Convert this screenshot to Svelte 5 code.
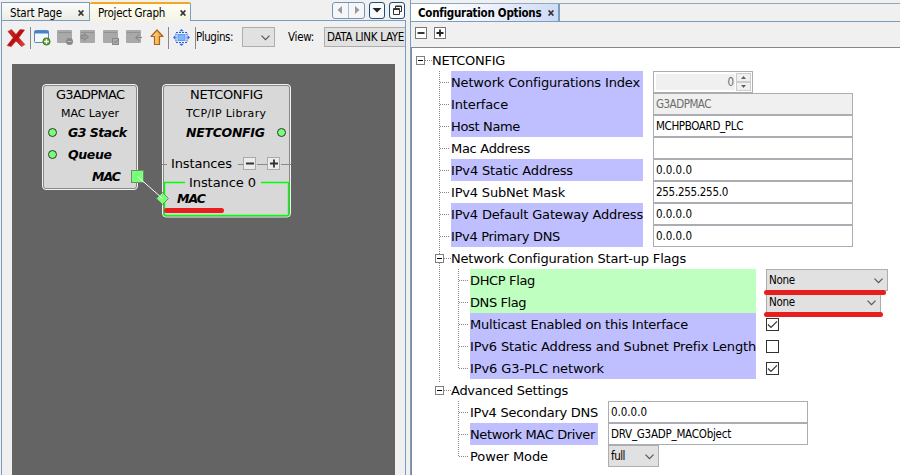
<script>
  const interfaceRows = [
    { label: 'Network Configurations Index', w: 189, tone: 'blue', kind: 'spin', value: '0' },
    { label: 'Interface', w: 57, tone: 'blue', kind: 'text', value: 'G3ADPMAC', vw: 55, disabled: true },
    { label: 'Host Name', w: 69, tone: 'blue', kind: 'text', value: 'MCHPBOARD_PLC', vw: 87 },
    { label: 'Mac Address', w: 79, kind: 'text', value: '', vw: 0 },
    { label: 'IPv4 Static Address', w: 122, tone: 'blue', kind: 'text', value: '0.0.0.0', vw: 36 },
    { label: 'IPv4 SubNet Mask', w: 114, kind: 'text', value: '255.255.255.0', vw: 72 },
    { label: 'IPv4 Default Gateway Address', w: 192, tone: 'blue', kind: 'text', value: '0.0.0.0', vw: 36 },
    { label: 'IPv4 Primary DNS', w: 109, tone: 'blue', kind: 'text', value: '0.0.0.0', vw: 36 }
  ];
  const flagRows = [
    { label: 'DHCP Flag', w: 65, tone: 'green', kind: 'combo', value: 'None', vw: 26, size: 122, mark: 122 },
    { label: 'DNS Flag', w: 56, tone: 'green', kind: 'combo', value: 'None', vw: 26, size: 115, mark: 119 },
    { label: 'Multicast Enabled on this Interface', w: 218, tone: 'blue', kind: 'check', on: true },
    { label: 'IPv6 Static Address and Subnet Prefix Length', w: 286, tone: 'blue', kind: 'check', on: false },
    { label: 'IPv6 G3-PLC network', w: 134, tone: 'blue', kind: 'check', on: true }
  ];
  const advancedRows = [
    { label: 'IPv4 Secondary DNS', w: 128, kind: 'text', value: '0.0.0.0', vw: 36 },
    { label: 'Network MAC Driver', w: 125, tone: 'blue', kind: 'text', value: 'DRV_G3ADP_MACObject', vw: 120 },
    { label: 'Power Mode', w: 78, kind: 'combo', value: 'full', vw: 14, size: 51 }
  ];

  // Spreads the letters of a label over its intended width.
  function fit(node, width) {
    const n = node.textContent.length;
    if (!n || !width) return;
    const natural = node.getBoundingClientRect().width;
    node.style.letterSpacing = (width - natural) / n + 'px';
  }
</script>

{#snippet chevron()}
  <svg class="chev" width="9" height="6" viewBox="0 0 9 6"><path d="M.5 .7 4.5 4.7 8.5 .7" fill="none" stroke="#555" stroke-width="1.2" /></svg>
{/snippet}

{#snippet closeX()}
  <svg width="6" height="6" viewBox="0 0 6 6"><path d="M.6 .4 5.4 5.6M5.4 .4 .6 5.6" stroke="#333" stroke-width="1.6" /></svg>
{/snippet}

{#snippet rows(list)}
  {#each list as r, i}
    <div class="row">
      <div class="branch" class:last={i === list.length - 1}></div>
      <div class="label {r.tone ?? ''}"><span use:fit={r.w}>{r.label}</span></div>
      <div class="cell">
        {#if r.kind === 'text'}
          <div class="field" class:disabled={r.disabled}><span use:fit={r.vw}>{r.value}</span></div>
        {:else if r.kind === 'spin'}
          <div class="spinner">
            <div class="num">{r.value}</div>
            <div class="arrows">
              <div><svg width="5" height="3"><path d="M0 3 2.5 0 5 3Z" fill="#606060" /></svg></div>
              <div><svg width="5" height="3"><path d="M0 0 2.5 3 5 0Z" fill="#606060" /></svg></div>
            </div>
          </div>
        {:else if r.kind === 'combo'}
          <div class="combo" style="width:{r.size}px"><span use:fit={r.vw}>{r.value}</span>{@render chevron()}</div>
          {#if r.mark}<div class="mark" style="width:{r.mark}px"></div>{/if}
        {:else}
          <div class="check">
            {#if r.on}<svg width="11" height="11" viewBox="0 0 11 11"><path d="M1 5.5 4 8.5 10 2.3" fill="none" stroke="#333" stroke-width="1.2" /></svg>{/if}
          </div>
        {/if}
      </div>
    </div>
  {/each}
{/snippet}

{#snippet head(text, w)}
  <div class="head">
    <svg width="9" height="9"><rect x=".5" y=".5" width="8" height="8" fill="#fff" stroke="#808080" /><path d="M2 4.5H7" stroke="#000" /></svg>
    <i></i><span use:fit={w}>{text}</span>
  </div>
{/snippet}

<div class="app">
  <section class="left">
    <div class="tabs">
      <div class="tab start"><span use:fit={52}>Start Page</span>{@render closeX()}</div>
      <div class="tab graph"><span use:fit={67}>Project Graph</span>{@render closeX()}</div>
      <div class="nav">
        <svg width="33" height="17" viewBox="0 0 33 17"><rect x=".5" y=".5" width="32" height="16" rx="2.5" fill="#f4f6f8" stroke="#7394b3" /><path d="M16.5 1V16" stroke="#a9bccd" /><path d="M10 4V12L5.5 8ZM23 4V12L27.5 8Z" fill="#999" /></svg>
        <svg width="16" height="17" viewBox="0 0 16 17"><rect x=".5" y=".5" width="15" height="16" rx="2.5" fill="#f8fafc" stroke="#1f4e7a" /><path d="M3.5 6H12.5L8 10.5Z" fill="#222" /></svg>
        <svg width="16" height="17" viewBox="0 0 16 17"><rect x=".5" y=".5" width="15" height="16" rx="2.5" fill="#f8fafc" stroke="#1f4e7a" /><path d="M6.5 6V4H12.5V9.5H10.5M6 4.5H13" fill="none" stroke="#333" /><path d="M4.5 6.5H10.5V12.5H4.5ZM4 7.5H11" fill="none" stroke="#333" /></svg>
      </div>
    </div>

    <div class="toolbar">
      <svg class="del" width="20" height="20" viewBox="0 0 20 20"><defs><linearGradient id="red" x1="0" y1="0" x2="1" y2="1"><stop offset="0" stop-color="#d42a2a" /><stop offset=".5" stop-color="#b80d0d" /><stop offset="1" stop-color="#f04a40" /></linearGradient></defs><path d="M2 3.5 5.5 1.5 10 6.6 14 1.6 18.5 2 12.8 9.8 18.8 16.5 15.5 18.6 10 13 5.2 18.6 1.2 17.6 7.2 9.8Z" fill="url(#red)" stroke="#b81c1c" stroke-width=".6" /></svg>
      <b class="sep"></b>
      <div class="icons">
        <svg width="17" height="17" viewBox="0 0 17 17"><rect x=".5" y="1.5" width="14" height="12" rx="1" fill="#f1f8fe" stroke="#5b86b8" /><path d="M.5 2H14.5V4.5H.5Z" fill="#4483cc" /><circle cx="12.5" cy="12.5" r="3.6" fill="#5c9d32" stroke="#427d21" /><path d="M12.5 10.2V14.8M10.2 12.5H14.8" stroke="#fff" stroke-width="1.4" /></svg>
        {#each [0, 1, 2, 3] as k}
          <svg width="17" height="17" viewBox="0 0 17 17">
            <rect x="0" y="1" width="15" height="13" rx="1" fill="#a9a9a9" /><path d="M1 3.5H14" stroke="#929292" />
            {#if k === 0}<circle cx="12.5" cy="12.5" r="3.5" fill="#888" /><path d="M10.5 12.5H14.5" stroke="#bbb" />
            {:else if k === 1}<path d="M1 6.5H4V4.5L8.5 8 4 11.5V9.5H1Z" fill="#999" stroke="#888" />
            {:else if k === 2}<rect x="9.5" y="9.5" width="6" height="6" fill="#aaa" stroke="#888" /><path d="M11 12 12.5 14 15 10.5" fill="none" stroke="#808080" />
            {:else}<path d="M13.5 5 9.5 8.5 13.5 12M10 8.5H16" fill="none" stroke="#858585" />{/if}
          </svg>
        {/each}
      </div>
      <svg class="up" width="14" height="17" viewBox="0 0 14 17"><defs><linearGradient id="or"><stop offset="0" stop-color="#ffe1a0" /><stop offset="1" stop-color="#f09a24" /></linearGradient></defs><path d="M7 1 13 7.5H9.5V15.5H4.5V7.5H1Z" fill="url(#or)" stroke="#a8651b" stroke-width="1.2" stroke-linejoin="round" /></svg>
      <b class="sep"></b>
      <svg class="fitv" width="17" height="17" viewBox="0 0 17 17"><rect x="3" y="3.5" width="11" height="10" fill="none" stroke="#2d5be0" stroke-dasharray="2 1" /><rect x="5" y="5.5" width="7" height="6" fill="#7db8ff" stroke="#5a9af8" /><path d="M8.5 0 10.8 2.3H6.2ZM8.5 17 10.8 14.7H6.2ZM0 8.5 2.3 6.2V10.8ZM17 8.5 14.7 6.2V10.8Z" fill="#3265e6" /></svg>
      <b class="sep"></b>
      <span class="t1" use:fit={37}>Plugins:</span>
      <div class="combo c1">{@render chevron()}</div>
      <span class="t2" use:fit={26}>View:</span>
      <div class="combo c2"><span use:fit={77}>DATA LINK LAYE</span></div>
    </div>

    <div class="canvas">
      <svg width="383" height="411" viewBox="12 64 383 411" class="diagram">
        <g fill="#d8d8d8">
          <rect x="42.5" y="84.5" width="95" height="105" rx="3.5" stroke="#f2f2f2" />
          <rect x="43.5" y="85.5" width="93" height="103" rx="2.5" stroke="#888" />
          <rect x="162.5" y="84.5" width="128" height="132.5" rx="3.5" stroke="#f2f2f2" />
          <rect x="163.5" y="85.5" width="126" height="130.5" rx="2.5" stroke="#888" />
        </g>
        <path d="M162 164.5H167M238 164.5H243M257 164.5H267M281 164.5H291" stroke="#888" />
        <path d="M185 182.5H164.5V215.5H288.5V182.5H261" fill="none" stroke="#0f0" stroke-width="1.4" />
        <g class="t">
          <text x="56" y="99" textLength="69">G3ADPMAC</text>
          <text class="sm" x="61" y="117" textLength="58">MAC Layer</text>
          <text class="bi" x="68" y="137" textLength="59">G3 Stack</text>
          <text class="bi" x="68" y="159" textLength="44">Queue</text>
          <text class="bi" x="92" y="181" textLength="29">MAC</text>
          <text x="190" y="99" textLength="73">NETCONFIG</text>
          <text class="sm" x="186" y="117" textLength="80">TCP/IP Library</text>
          <text class="bi" x="186" y="137" textLength="79">NETCONFIG</text>
          <text x="171" y="168" textLength="61">Instances</text>
          <text x="189" y="187" textLength="67">Instance 0</text>
          <text class="bi" x="177" y="203" textLength="29">MAC</text>
        </g>
        <g fill="#7f7" stroke="#333">
          <circle cx="52.5" cy="132.5" r="4" /><circle cx="52.5" cy="154.5" r="4" /><circle cx="281.5" cy="132.5" r="4" />
        </g>
        <rect x="131.5" y="170.5" width="12" height="12" fill="#7f7" stroke="#6c8c6c" />
        <path d="M162.5 192.5 168.5 198.5 162.5 204.5 156.5 198.5Z" fill="#7f7" stroke="#6c8c6c" />
        <path d="M137.5 176.5 162.5 198.5" stroke="#fff" />
        <g fill="#ececec" stroke="#aaa"><rect x="243.5" y="157.5" width="12" height="12" /><rect x="267.5" y="157.5" width="12" height="12" /></g>
        <path d="M246 163.5H254M270 163.5H278M274 159.5V167.5" stroke="#333" stroke-width="1.8" />
        <path d="M166.5 210.5H221.5" stroke="#e81e1e" stroke-width="5" stroke-linecap="round" />
      </svg>
    </div>
  </section>

  <section class="right">
    <div class="rtabs">
      <div class="rtab"><span use:fit={123}>Configuration Options</span>{@render closeX()}</div>
    </div>
    <div class="rbar">
      <svg width="12" height="12"><rect x=".5" y=".5" width="11" height="11" fill="#fff" stroke="#777" /><path d="M2.5 6H9.5" stroke="#222" stroke-width="1.8" /></svg>
      <svg width="12" height="12"><rect x=".5" y=".5" width="11" height="11" fill="#fff" stroke="#777" /><path d="M2.5 6H9.5M6 2.5V9.5" stroke="#222" stroke-width="1.8" /></svg>
    </div>
    <div class="tree">
      {@render head('NETCONFIG', 73)}
      <div class="level1">
        <div class="group g1">{@render rows(interfaceRows)}</div>
        {@render head('Network Configuration Start-up Flags', 235)}
        <div class="group g2">{@render rows(flagRows)}</div>
        {@render head('Advanced Settings', 117)}
        <div class="group g3">{@render rows(advancedRows)}</div>
      </div>
    </div>
  </section>
</div>

<style>
  :global(body) { margin: 0; overflow: hidden; }
  .app { width: 900px; height: 475px; display: flex; background: #f0f0f0; overflow: hidden; font: 11.5px 'DejaVu Sans Condensed', 'DejaVu Sans', sans-serif; color: #000; }
  .app * { box-sizing: border-box; }
  svg { display: block; flex: none; }
  span { white-space: pre; flex: none; }

  .left { width: 406px; flex: none; display: flex; flex-direction: column; }
  .tabs { height: 21px; flex: none; display: flex; margin-left: 1px; padding-top: 2px; background: linear-gradient(#7a9dbd, #7a9dbd) 0 100% / 100% 1px no-repeat; }
  .tab { display: flex; align-items: center; border: 1px solid #7a9dbd; height: 19px; }
  .tab span { padding-top: 2px; }
  .tab svg { margin-left: auto; margin-top: 2px; }
  .start { width: 89px; padding: 0 5px 0 8px; background: linear-gradient(#fbfbfa, #ecece6); }
  .graph { width: 101px; padding: 0 4px 1px 8px; border-top: 2px solid #f5a623; border-left: 0; border-bottom: 0; background: linear-gradient(#fffef4, #f5f3e2); border-radius: 2px 2px 0 0; }
  .nav { display: flex; margin-left: auto; gap: 4px; padding-right: 1px; }
  .toolbar { height: 43px; flex: none; margin-left: 1px; border: solid #7a9dbd; border-width: 0 1px; display: flex; align-items: flex-start; padding-top: 6px; overflow: hidden; line-height: 21px; }
  .sep { width: 1px; height: 22px; background: #888; flex: none; }
  .del { margin: 1px 4px 0 4px; }
  .icons { display: flex; gap: 6px; margin: 2px 0 0 3px; }
  .up { margin: 2px 4px 0 7px; }
  .fitv { margin: 2px 5px 0 4px; }
  .toolbar .combo { flex: none; height: 20px; }
  .c1 { width: 33px; margin-left: 9px; }
  .t2 { margin-left: 13px; }
  .c2 { width: 110px; margin-left: 10px; }
  .toolbar .c2 { padding-left: 2px; }
  .canvas { flex: 1; margin-left: 1px; border: solid #7a9dbd; border-width: 0 1px; padding-left: 10px; }
  .diagram { background: #646464; }
  .t { font: 13px 'DejaVu Sans', sans-serif; fill: #000; }
  .t .sm { font-size: 11px; }
  .t .bi { font-weight: bold; font-style: oblique; font-size: 12.5px; }

  .right { flex: 1; margin-left: 4px; display: flex; flex-direction: column; border-left: 1px solid #7a9dbd; }
  .rtabs { height: 19px; margin-top: 3px; flex: none; border-top: 1px solid #8fa9bf; background: linear-gradient(#7a9dbd, #7a9dbd) 0 100% / 100% 1px no-repeat; }
  .rtab { width: 149px; height: 18px; display: flex; align-items: center; padding: 0 4px 0 7px; border-right: 2px solid #7a9dbd; border-bottom: 1px solid #7a9dbd; background: linear-gradient(110deg, #fff 10%, #eef3fd 50%, #ccdaf4); font-weight: bold; }
  .rtab svg { margin-left: auto; margin-top: 1px; }
  .rbar { height: 25px; flex: none; display: flex; gap: 7px; padding: 5px 0 0 4px; }
  .tree { flex: 1; border: solid #828790; border-width: 1px 0 0 1px; background: #fff; padding: 1px 0 0 4px; font: 13px 'DejaVu Sans', sans-serif; line-height: 22px; }
  .head { height: 22px; display: flex; align-items: center; }
  .head span { padding-top: 2px; }
  .head i { width: 7px; height: 1px; margin-top: 1px; background: repeating-linear-gradient(90deg, #888 0 1px, #fff 1px 2px); }
  .level1 { padding-left: 19px; background: repeating-linear-gradient(#888 0 1px, #fff 1px 2px) 23px 0 / 1px 312px no-repeat; }
  .row { height: 22px; display: flex; }
  .branch { width: 12px; flex: none; background: repeating-linear-gradient(90deg, #888 0 1px, transparent 1px 2px) 1px 11px / 9px 1px no-repeat, repeating-linear-gradient(#888 0 1px, transparent 1px 2px) 0 0 / 1px 22px no-repeat; }
  .branch.last { background-size: 9px 1px, 1px 12px; }
  .g1 { padding-left: 4px; }
  .g1 .branch.last { background-size: 9px 1px, 1px 22px; }
  .g2, .g3 { padding-left: 23px; }
  .label { flex: none; height: 22px; line-height: 24px; margin-right: 10px; white-space: nowrap; }
  .g1 .label { width: 192px; }
  .g2 .label { width: 286px; }
  .g3 .label { width: 128px; }
  .blue { background: #bfbfff; }
  .green { background: #bfffbf; }
  .cell { position: relative; font: 11.5px 'DejaVu Sans Condensed', sans-serif; line-height: 21px; }
  .field { width: 200px; height: 22px; border: 1px solid #abadb3; padding-left: 2px; background: #fff; }
  .disabled { background: #f0f0f0; color: #6d6d6d; }
  .combo { height: 22px; display: flex; align-items: center; border: 1px solid #adadad; background: #e1e1e1; padding: 0 4px 0 2px; }
  .chev { margin-left: auto; margin-top: 2px; }
  .mark { position: absolute; z-index: 2; left: -2px; top: 21px; height: 5px; border-radius: 3px; background: #e81e1e; }
  .spinner { width: 100px; height: 22px; border: 1px solid #abadb3; padding: 1px; display: flex; }
  .num { width: 79px; height: 16px; margin: 1px; background: #f0f0f0; color: #6d6d6d; text-align: right; padding-right: 1px; line-height: 17px; }
  .arrows { width: 15px; margin-left: auto; }
  .arrows div { height: 9px; border: 1px solid #ccc; background: #f0f0f0; display: flex; align-items: center; justify-content: center; }
  .check { width: 13px; height: 13px; margin-top: 5px; border: 1px solid #333; background: #fff; }
</style>
